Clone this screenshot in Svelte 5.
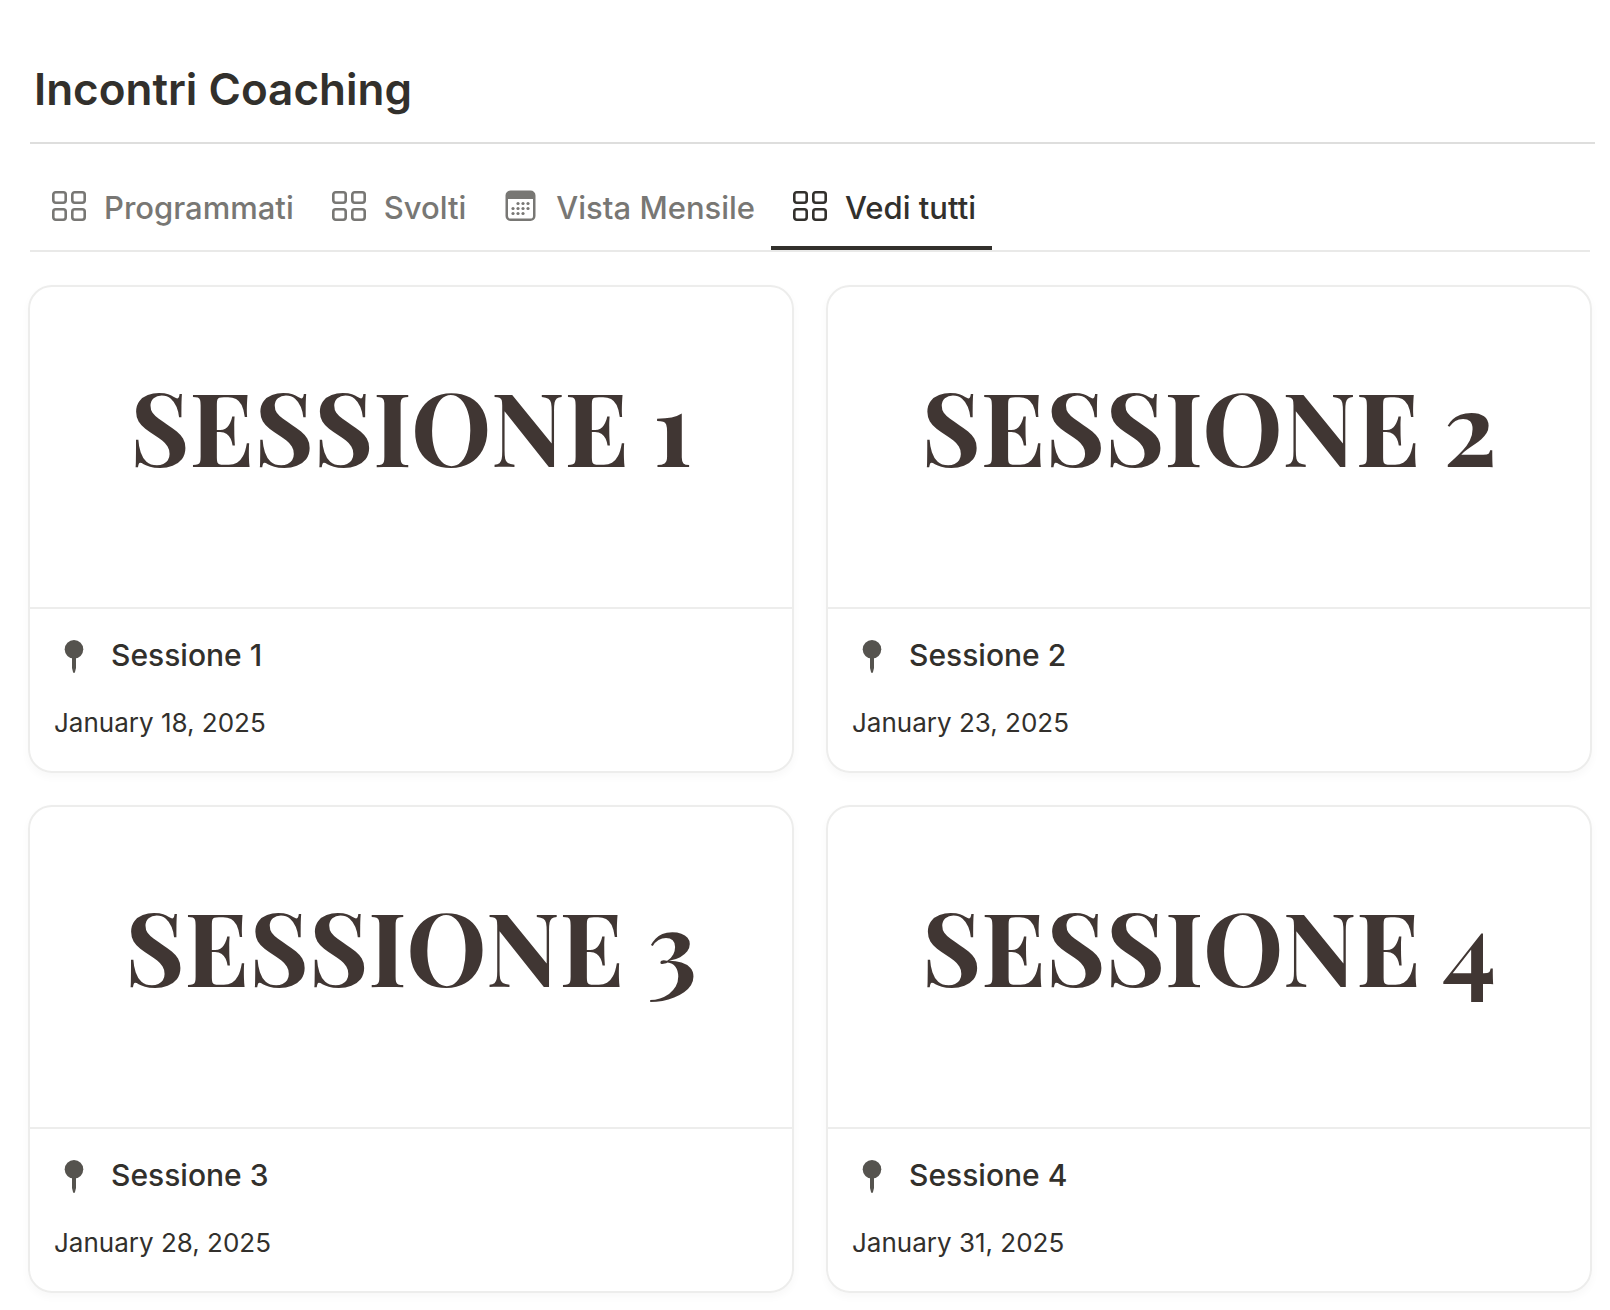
<script>
  const tabs = [
    { id: "programmati", label: "Programmati", icon: "gallery" },
    { id: "svolti", label: "Svolti", icon: "gallery" },
    { id: "mensile", label: "Vista Mensile", icon: "calendar" },
    { id: "tutti", label: "Vedi tutti", icon: "gallery" },
  ];

  const sessions = [
    { title: "Sessione 1", date: "January 18, 2025" },
    { title: "Sessione 2", date: "January 23, 2025" },
    { title: "Sessione 3", date: "January 28, 2025" },
    { title: "Sessione 4", date: "January 31, 2025" },
  ];

  // dots of the calendar icon
  const dots = [
    [16, 14.5], [21, 14.5], [26, 14.5],
    [11, 19.5], [16, 19.5], [21, 19.5], [26, 19.5],
    [11, 24.5], [16, 24.5], [21, 24.5],
  ];

  let active = "tutti";
</script>

<style>
  :global(body) {
    margin: 0;
    background: #fff;
  }

  .page {
    padding: 60px 15px 16px 30px;

    font-family: Inter, "Liberation Sans", sans-serif;
    color: #32302c;
  }

  h1 {
    margin: 0;
    padding: 0 4px 24px;

    font-size: 44px;
    font-weight: 600;
    line-height: 58px;

    border-bottom: 2px solid #dededd;
  }

  .tabs {
    display: flex;

    margin: 24px 5px 0 0;

    border-bottom: 2px solid #e9e9e8;
  }

  .tabs button {
    display: flex;
    align-items: center;
    gap: 18px;

    height: 82px;
    padding: 0 16px 0 20px;

    font-family: inherit;
    font-size: 31px;
    font-weight: 500;
    white-space: nowrap;

    color: #787774;
    background: none;
    border: none;
    border-bottom: 4px solid transparent;
    cursor: pointer;
  }

  .tabs button.active {
    color: #32302c;
    border-bottom-color: #32302c;
  }

  .tabs svg {
    flex: none;
    width: 36px;
    height: 36px;
  }

  .cards {
    display: grid;
    grid-template-columns: 1fr 1fr;
    gap: 32px;

    margin: 33px 3px 0 -2px;
  }

  .card {
    overflow: hidden;

    color: inherit;
    text-decoration: none;

    border: 2px solid #ededec;
    border-radius: 24px;
    box-shadow: 0 4px 8px rgba(15, 15, 15, 0.03);
  }

  .cover {
    display: flex;
    justify-content: center;
    align-items: center;

    height: 276px;
    padding-bottom: 44px;

    font-family: "Playfair Display", "Liberation Serif", serif;
    font-size: 102px;
    font-weight: 700;
    text-transform: uppercase;
    white-space: nowrap;

    color: #403633;
    border-bottom: 2px solid #ededec;
  }

  .info {
    padding: 23px 24px 28px;
  }

  h2 {
    display: flex;
    align-items: center;
    gap: 21px;

    margin: 0 0 25px;

    font-size: 30px;
    font-weight: 500;
    line-height: 46px;
  }

  h2 svg {
    flex: none;
    width: 36px;
    height: 36px;
  }

  p {
    margin: 0;

    font-size: 26px;
    line-height: 40px;
  }
</style>

<main class="page">
  <h1>Incontri Coaching</h1>

  <div class="tabs" role="tablist">
    {#each tabs as tab}
      <button
        type="button"
        role="tab"
        aria-selected={active === tab.id}
        class:active={active === tab.id}
        on:click={() => (active = tab.id)}>
        {#if tab.icon === "gallery"}
          <svg viewBox="0 0 36 36" fill="none" stroke="currentColor" stroke-width="2.6" aria-hidden="true">
            <rect x="3.3" y="3.3" width="12.4" height="10.4" rx="2.4" />
            <rect x="22.3" y="3.3" width="12.4" height="10.4" rx="2.4" />
            <rect x="3.3" y="20.3" width="12.4" height="10.4" rx="2.4" />
            <rect x="22.3" y="20.3" width="12.4" height="10.4" rx="2.4" />
          </svg>
        {:else}
          <svg viewBox="0 0 36 36" fill="currentColor" aria-hidden="true">
            <path
              fill-rule="evenodd"
              d="M8.5 1.5h20a5 5 0 0 1 5 5V27a5 5 0 0 1-5 5H8.5a5 5 0 0 1-5-5V6.5a5 5 0 0 1 5-5ZM6 10v17a2.6 2.6 0 0 0 2.6 2.6h19.8A2.6 2.6 0 0 0 31 27V10Z" />
            {#each dots as [x, y]}
              <circle cx={x} cy={y} r="1.6" />
            {/each}
          </svg>
        {/if}
        {tab.label}
      </button>
    {/each}
  </div>

  <section class="cards">
    {#each sessions as session}
      <a class="card" href="#{session.title.toLowerCase().replace(' ', '-')}">
        <div class="cover">{session.title}</div>
        <div class="info">
          <h2>
            <svg viewBox="0 0 36 36" fill="#55534e" aria-hidden="true">
              <circle cx="20" cy="12.3" r="9.3" />
              <path d="M18 20h4v11l-1.2 4.8h-1.6L18 31Z" />
            </svg>
            {session.title}
          </h2>
          <p>{session.date}</p>
        </div>
      </a>
    {/each}
  </section>
</main>
